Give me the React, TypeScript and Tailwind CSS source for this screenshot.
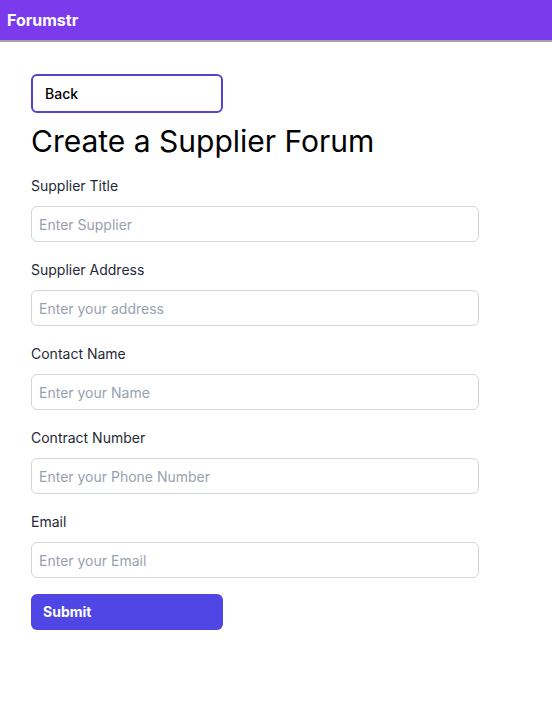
import React from "react"

const fields = [
  { label: "Supplier Title", placeholder: "Enter Supplier" },
  { label: "Supplier Address", placeholder: "Enter your address" },
  { label: "Contact Name", placeholder: "Enter your Name" },
  { label: "Contract Number", placeholder: "Enter your Phone Number" },
  { label: "Email", placeholder: "Enter your Email" },
]

export default function App() {
  return (
    <div className="min-h-screen bg-white font-['Inter',sans-serif] text-black">
      <nav className="h-[42px] bg-[#7c3aed] border-b-2 border-b-[#a3a3a3] flex items-center px-[7px]">
        <span className="text-white font-bold text-base">Forumstr</span>
      </nav>
      <div className="pl-[31px] pt-[32px]">
        <button className="w-48 h-[39px] border-2 border-[#5145cd] rounded-md text-left pl-3 text-sm font-medium bg-white">
          Back
        </button>
        <h1 className="text-3xl mt-[10px] mb-[17px]">Create a Supplier Forum</h1>
        <form className="max-w-md w-[448px]">
          {fields.map(f => (
            <div key={f.label} className="mb-[18px]">
              <label className="block text-sm text-[#1f2937] leading-5">{f.label}</label>
              <input
                type="text"
                placeholder={f.placeholder}
                className="mt-[10px] w-full h-9 border border-gray-300 rounded-md pl-[7px] pr-2 text-sm placeholder:text-gray-400 outline-none"
              />
            </div>
          ))}
          <button type="button" className="w-48 h-9 -mt-[2px] bg-[#4f46e5] text-white font-bold text-sm rounded-md text-left pl-3">
            Submit
          </button>
        </form>
      </div>
    </div>
  )
}
